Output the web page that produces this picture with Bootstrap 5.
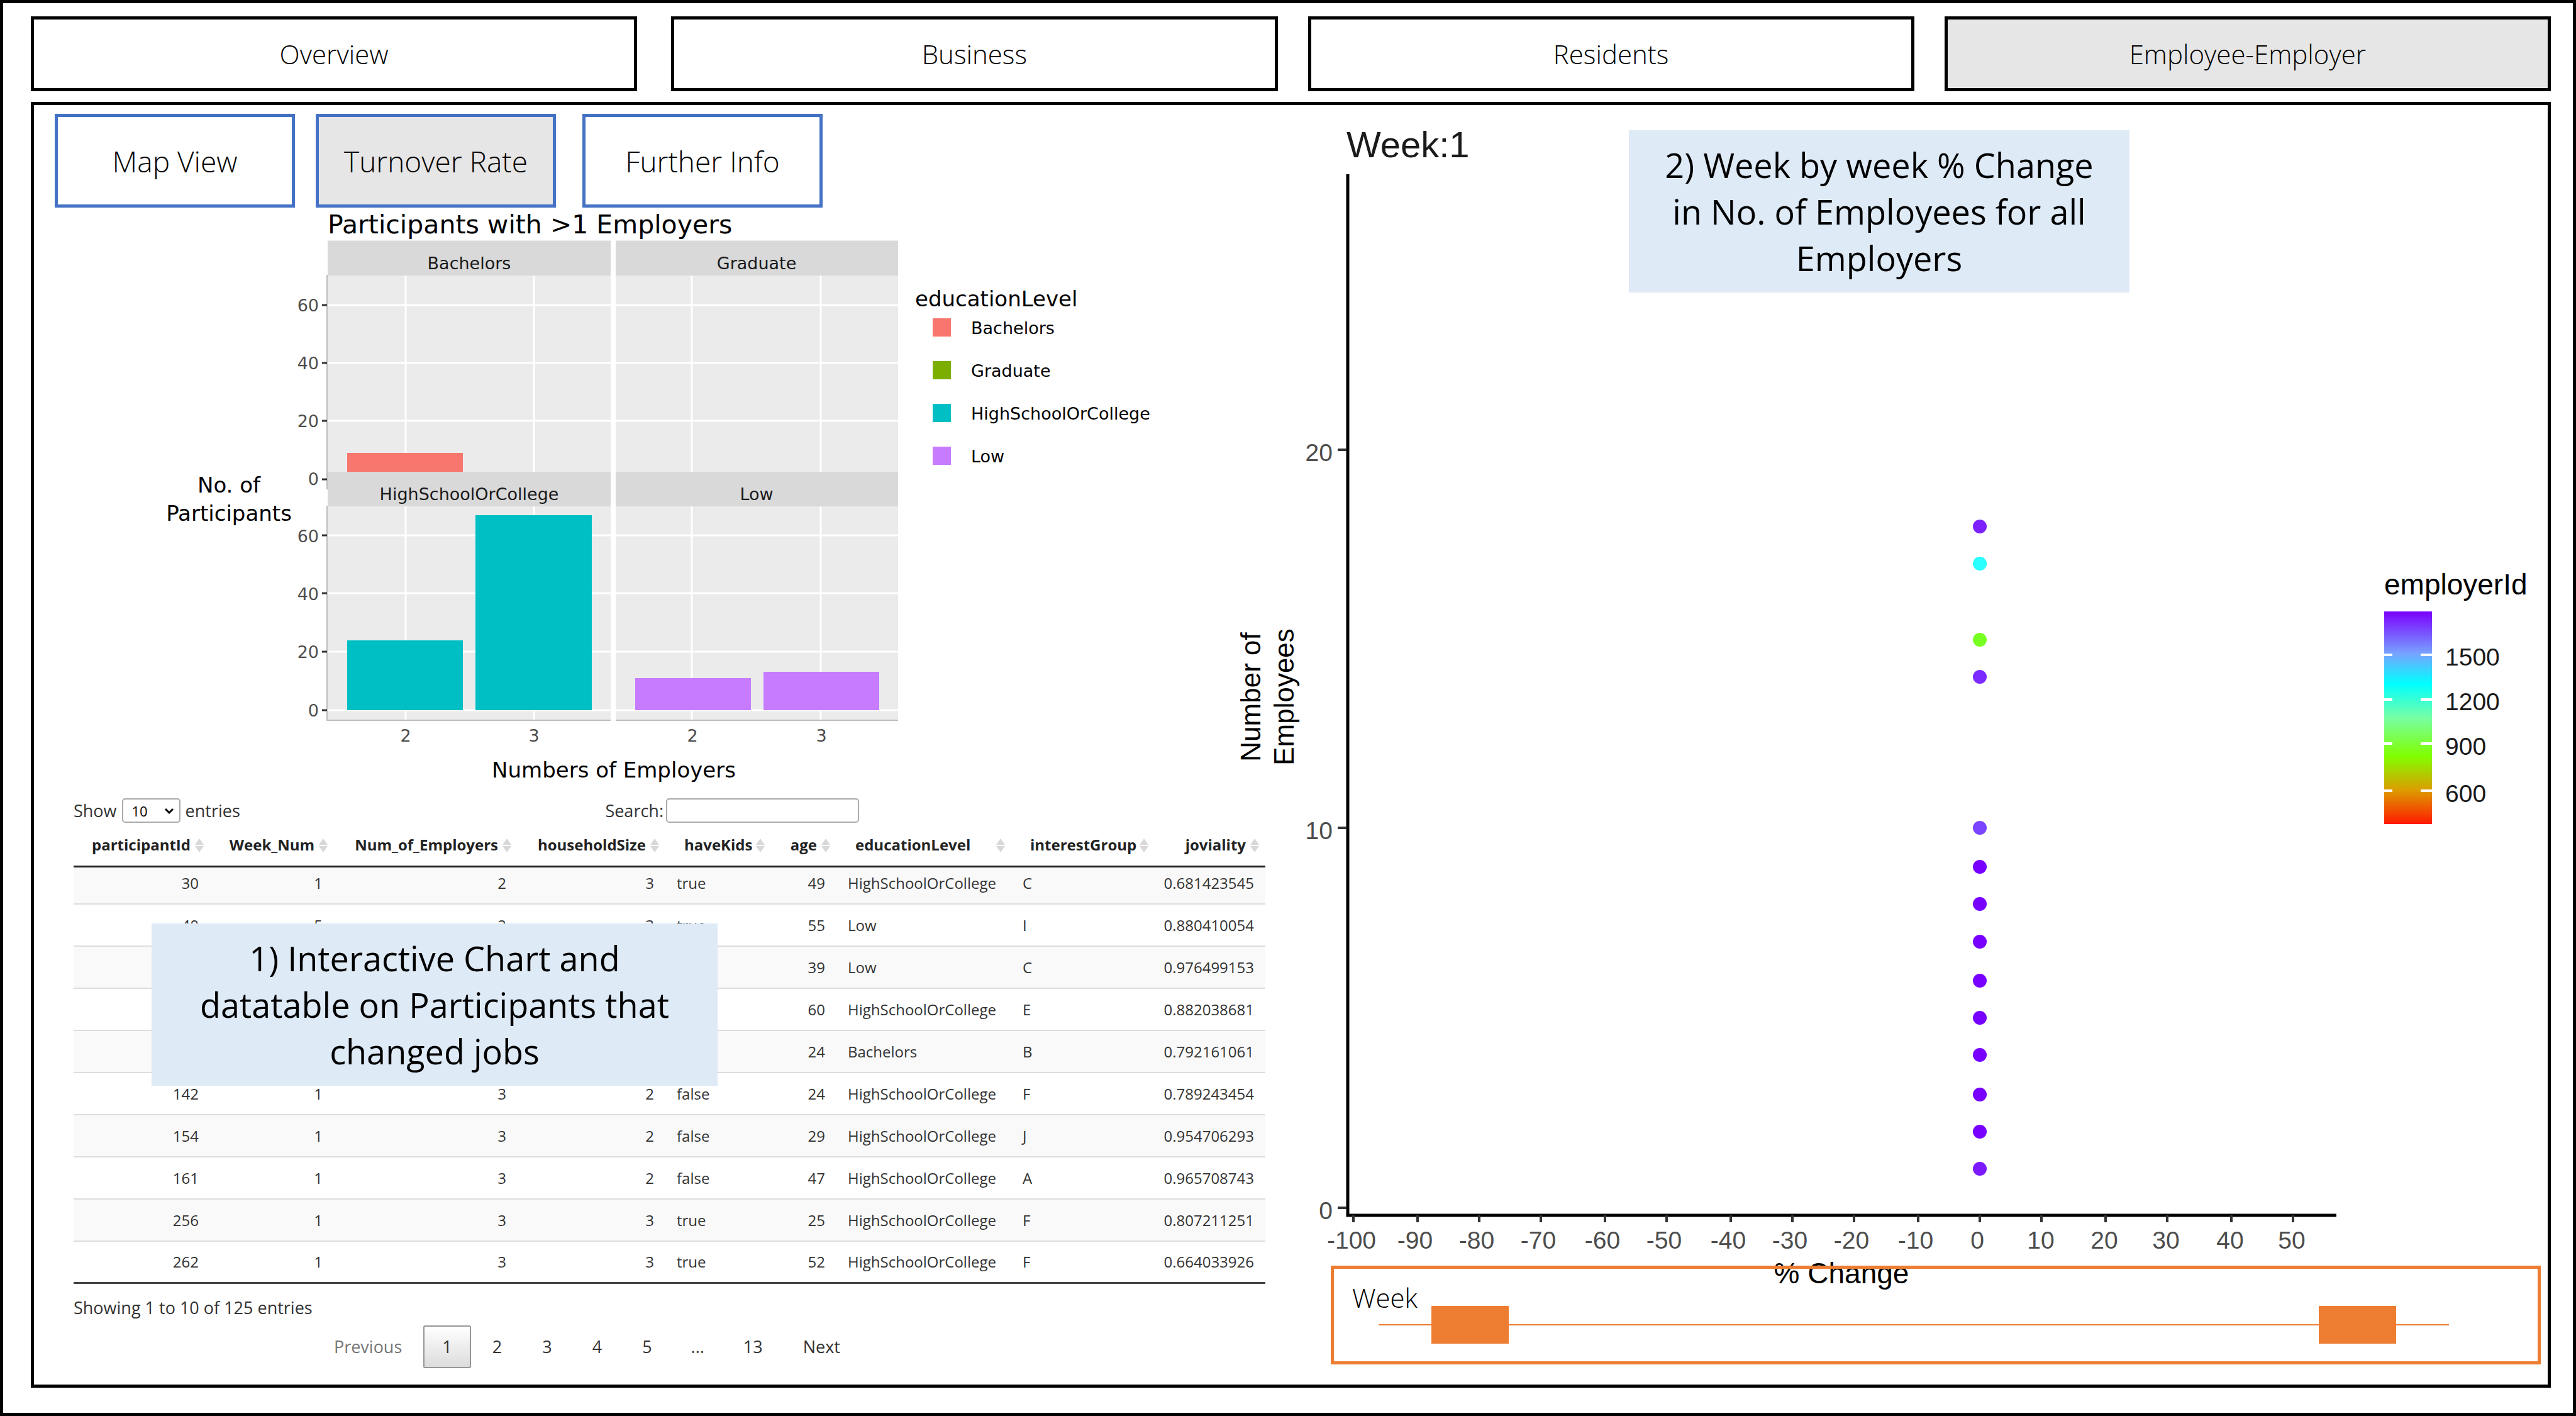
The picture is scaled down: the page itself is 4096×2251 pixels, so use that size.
<!DOCTYPE html>
<html lang="en">
<head>
<meta charset="utf-8">
<meta name="viewport" content="width=device-width, initial-scale=1">
<title>Employee-Employer</title>
<link rel="stylesheet" href="https://cdn.jsdelivr.net/npm/bootstrap@5.3.0/dist/css/bootstrap.min.css">
<style>
  body { font-family: "DejaVu Sans", sans-serif; color: #000; background: #fff; }
  .frame { border: 5px solid #000; padding: 21px 35px 40px 44px; }

  /* Navigation */
  .light-text { font-family: "Open Sans", "Noto Sans", sans-serif; font-weight: 300; color: #000; }
  .main-nav { gap: 48px; margin-bottom: 17px; }
  .main-nav .nav-link { height: 119px; border: 5px solid #000; border-radius: 0; font-size: 42px; line-height: 56px; color: #000; padding: 0; }
  .main-nav .nav-link:first-child { margin-right: 6px; }
  .view-nav { gap: 33px; padding: 14px 0 0 33px; }
  .view-nav .nav-link { width: 382px; height: 149px; border: 5px solid #4472c4; border-radius: 0; font-size: 46px; line-height: 60px; color: #000; padding: 0; }
  .view-nav .nav-link:last-child { margin-left: 9px; }
  .nav-link.active { background: #e7e6e6; }

  .board { border: 5px solid #000; display: grid; grid-template-columns: 1966fr 2031fr; }
  .board svg { overflow: visible; }

  .note-box { position: absolute; background: #deeaf6; font-family: "Open Sans", "Noto Sans", sans-serif; font-size: 54px; line-height: 74px; height: 258px; z-index: 2; }
  .note-left { left: 187px; top: 1301px; width: 900px; }
  .note-right { left: 570px; top: 40px; width: 796px; }

  /* Bar chart */
  .c-title { font-size: 41px; }
  .c-axis { font-size: 34px; }
  .c-label { font-size: 27px; }
  .tick-fill { fill: #4d4d4d; }
  .mid { text-anchor: middle; }
  .end { text-anchor: end; }

  /* Data table */
  .data-area { padding: 9px 8px 0 63px; color: #333; font-family: "Open Sans", "Noto Sans", sans-serif; font-size: 27px; line-height: 34px; }
  .data-bar { width: 1249px; }
  .len-select { width: 93px; height: 39px; padding: 0 0 0 14px; font-size: 22px; line-height: 34px; border: 2px solid #aaa; border-radius: 5px; color: #000;
    background-image: url("data:image/svg+xml,%3csvg xmlns='http://www.w3.org/2000/svg' viewBox='0 0 16 16'%3e%3cpath fill='none' stroke='black' stroke-width='3' d='m2 5 6 6 6-6'/%3e%3c/svg%3e"); background-position: right 8px center; background-size: 16px; }
  .find-box { width: 307px; height: 39px; padding: 0 8px; border: 2px solid #aaa; border-radius: 5px; font-size: 22px; }
  .people { width: 100%; table-layout: fixed; border-collapse: separate; border-spacing: 0; font-size: 24px; line-height: 30px; }
  .people th { height: 71px; border-bottom: 3px solid #222; padding: 2px 31px 0 30px; vertical-align: middle; position: relative; white-space: nowrap; color: #222; }
  .people th svg { position: absolute; right: 10px; top: 25px; }
  .people td { height: 67px; padding: 0 18px 17px; vertical-align: bottom; border-bottom: 2px solid #ddd; white-space: nowrap; }
  .people .text-end { padding-left: 0; }
  .people tbody tr:first-child td { height: 59px; }
  .people tbody tr:nth-child(odd) td { background: #f9f9f9; }
  .people tbody tr:last-child td { border-bottom: 3px solid #444; }
  .info-line { padding-top: 21px; }
  .pager { gap: 4px; margin-top: 11px; }
  .pager button { height: 68px; padding: 0 28px; border: 2px solid transparent; background: none; color: #333; font-size: 27px; }
  .pager button.on { border-color: #979797; border-radius: 3px; background: linear-gradient(#fff, #dcdcdc); }
  .pager button:disabled { color: #777; }
  .pager span { padding: 17px 28px; }

  /* Scatter plot */
  .scatter text { font-family: "Liberation Sans", sans-serif; }
  .s-title { font-size: 58px; }
  .s-axis { font-size: 46px; }
  .s-side { font-size: 44px; }
  .s-label { font-size: 39px; }

  /* Week range */
  .week-box { border: 5px solid #ed7d31; height: 157px; margin: 0 11px 32px 96px; position: relative; padding: 18px 141px 0 29px; }
  .week-name { font-size: 42px; line-height: 56px; }
  .week-track { display: grid; margin: -15px 0 0 42px; }
  .week-track input { grid-area: 1 / 1; appearance: none; -webkit-appearance: none; width: 100%; height: 60px; margin: 0; background: none; pointer-events: none; }
  .week-track input::-webkit-slider-runnable-track { height: 60px; background: linear-gradient(#ed7d31, #ed7d31) center / 100% 2px no-repeat; }
  .week-track input::-webkit-slider-thumb { -webkit-appearance: none; width: 123px; height: 60px; border: 0; border-radius: 0; background: #ed7d31; pointer-events: auto; }
</style>
<script src="https://cdn.jsdelivr.net/npm/bootstrap@5.3.0/dist/js/bootstrap.bundle.min.js"></script>
</head>
<body>
<div class="frame">
  <nav class="main-nav nav flex-nowrap light-text" aria-label="Sections">
    <a class="nav-link flex-fill w-100 d-flex align-items-center justify-content-center" href="#">Overview</a>
    <a class="nav-link flex-fill w-100 d-flex align-items-center justify-content-center" href="#">Business</a>
    <a class="nav-link flex-fill w-100 d-flex align-items-center justify-content-center" href="#">Residents</a>
    <a class="nav-link active flex-fill w-100 d-flex align-items-center justify-content-center" href="#">Employee-Employer</a>
  </nav>

  <main class="board">
    <section class="position-relative">
      <nav class="view-nav nav light-text" aria-label="Views">
        <a class="nav-link d-flex align-items-center justify-content-center" href="#">Map View</a>
        <a class="nav-link active d-flex align-items-center justify-content-center" href="#">Turnover Rate</a>
        <a class="nav-link d-flex align-items-center justify-content-center" href="#">Further Info</a>
      </nav>

      <svg class="d-block w-100" viewBox="54 330 1966 930" role="img" aria-label="Participants with more than one employer">
        <text class="c-title" x="521" y="371">Participants with &gt;1 Employers</text>
        <!-- panels -->
        <g fill="#ebebeb">
          <rect x="521" y="382" width="450" height="762"/>
          <rect x="979" y="382" width="449" height="762"/>
        </g>
        <path stroke="#fff" stroke-width="3" fill="none" d="M521 485H971M521 577H971M521 669H971M521 851H971M521 943H971M521 1036H971M521 1129H971M979 485H1428M979 577H1428M979 669H1428M979 851H1428M979 943H1428M979 1036H1428M979 1129H1428M645 437V1144M849 437V1144M1100 437V1144M1305 437V1144"/>
        <rect x="552" y="720" width="184" height="40" fill="#f8766d"/>
        <g fill="#d9d9d9">
          <rect x="521" y="383" width="450" height="55"/><rect x="979" y="383" width="449" height="55"/>
          <rect x="521" y="750" width="450" height="55"/><rect x="979" y="750" width="449" height="55"/>
        </g>
        <g fill="#00bfc4"><rect x="552" y="1018" width="184" height="111"/><rect x="756" y="819" width="185" height="310"/></g>
        <g fill="#c77cff"><rect x="1010" y="1078" width="184" height="51"/><rect x="1214" y="1068" width="184" height="61"/></g>
        <path stroke="#bebebe" stroke-width="2" fill="none" d="M520 437V778M520 804V1145H971M979 1145H1428"/>
        <path stroke="#333" stroke-width="3" d="M512 485h8M512 577h8M512 669h8M512 762h8M512 851h8M512 943h8M512 1036h8M512 1129h8"/>
        <g class="c-label mid" fill="#1a1a1a">
          <text x="746" y="428">Bachelors</text><text x="1203" y="428">Graduate</text>
          <text x="746" y="795">HighSchoolOrCollege</text><text x="1203" y="795">Low</text>
        </g>
        <g class="c-label end tick-fill">
          <text x="507" y="495">60</text><text x="507" y="587">40</text><text x="507" y="679">20</text><text x="507" y="771">0</text>
          <text x="507" y="862">60</text><text x="507" y="954">40</text><text x="507" y="1046">20</text><text x="507" y="1139">0</text>
        </g>
        <g class="c-label mid tick-fill">
          <text x="645" y="1179">2</text><text x="849" y="1179">3</text><text x="1101" y="1179">2</text><text x="1306" y="1179">3</text>
        </g>
        <g class="c-axis mid">
          <text x="364" y="783">No. of</text><text x="364" y="828">Participants</text>
          <text x="976" y="1236">Numbers of Employers</text>
        </g>
        <text class="c-axis" x="1455" y="487">educationLevel</text>
        <rect x="1483" y="506" width="29" height="29" fill="#f8766d"/><rect x="1483" y="574" width="29" height="29" fill="#7cae00"/>
        <rect x="1483" y="642" width="29" height="29" fill="#00bfc4"/><rect x="1483" y="710" width="29" height="29" fill="#c77cff"/>
        <g class="c-label">
          <text x="1544" y="531">Bachelors</text><text x="1544" y="599">Graduate</text><text x="1544" y="667">HighSchoolOrCollege</text><text x="1544" y="735">Low</text>
        </g>
      </svg>

      <div class="data-area">
        <div class="data-bar d-flex justify-content-between align-items-center">
          <div class="d-flex align-items-center gap-2">
            <label for="len">Show</label>
            <select id="len" class="form-select len-select"><option>10</option><option>25</option><option>50</option></select>
            <span>entries</span>
          </div>
          <div class="d-flex align-items-center gap-1">
            <label for="find">Search:</label>
            <input id="find" type="search" class="find-box">
          </div>
        </div>
        <table class="people">
          <colgroup><col style="width:217px"><col style="width:197px"><col style="width:292px"><col style="width:235px"><col style="width:168px"><col style="width:104px"><col style="width:278px"><col style="width:228px"><col style="width:176px"></colgroup>
          <thead><tr>
            <th class="text-end">participantId<svg width="14" height="22" fill="#d8d8d8"><path d="M7 0l7 10H0zM7 22l7-10H0z"/></svg></th>
            <th class="text-end">Week_Num<svg width="14" height="22" fill="#d8d8d8"><path d="M7 0l7 10H0zM7 22l7-10H0z"/></svg></th>
            <th class="text-end">Num_of_Employers<svg width="14" height="22" fill="#d8d8d8"><path d="M7 0l7 10H0zM7 22l7-10H0z"/></svg></th>
            <th class="text-end">householdSize<svg width="14" height="22" fill="#d8d8d8"><path d="M7 0l7 10H0zM7 22l7-10H0z"/></svg></th>
            <th>haveKids<svg width="14" height="22" fill="#d8d8d8"><path d="M7 0l7 10H0zM7 22l7-10H0z"/></svg></th>
            <th class="text-end">age<svg width="14" height="22" fill="#d8d8d8"><path d="M7 0l7 10H0zM7 22l7-10H0z"/></svg></th>
            <th>educationLevel<svg width="14" height="22" fill="#d8d8d8"><path d="M7 0l7 10H0zM7 22l7-10H0z"/></svg></th>
            <th>interestGroup<svg width="14" height="22" fill="#d8d8d8"><path d="M7 0l7 10H0zM7 22l7-10H0z"/></svg></th>
            <th class="text-end">joviality<svg width="14" height="22" fill="#d8d8d8"><path d="M7 0l7 10H0zM7 22l7-10H0z"/></svg></th>
          </tr></thead>
          <tbody>
            <tr><td class="text-end">30</td><td class="text-end">1</td><td class="text-end">2</td><td class="text-end">3</td><td>true</td><td class="text-end">49</td><td>HighSchoolOrCollege</td><td>C</td><td class="text-end">0.681423545</td></tr>
            <tr><td class="text-end">40</td><td class="text-end">5</td><td class="text-end">2</td><td class="text-end">3</td><td>true</td><td class="text-end">55</td><td>Low</td><td>I</td><td class="text-end">0.880410054</td></tr>
            <tr><td></td><td></td><td></td><td></td><td></td><td class="text-end">39</td><td>Low</td><td>C</td><td class="text-end">0.976499153</td></tr>
            <tr><td></td><td></td><td></td><td></td><td></td><td class="text-end">60</td><td>HighSchoolOrCollege</td><td>E</td><td class="text-end">0.882038681</td></tr>
            <tr><td></td><td></td><td></td><td></td><td></td><td class="text-end">24</td><td>Bachelors</td><td>B</td><td class="text-end">0.792161061</td></tr>
            <tr><td class="text-end">142</td><td class="text-end">1</td><td class="text-end">3</td><td class="text-end">2</td><td>false</td><td class="text-end">24</td><td>HighSchoolOrCollege</td><td>F</td><td class="text-end">0.789243454</td></tr>
            <tr><td class="text-end">154</td><td class="text-end">1</td><td class="text-end">3</td><td class="text-end">2</td><td>false</td><td class="text-end">29</td><td>HighSchoolOrCollege</td><td>J</td><td class="text-end">0.954706293</td></tr>
            <tr><td class="text-end">161</td><td class="text-end">1</td><td class="text-end">3</td><td class="text-end">2</td><td>false</td><td class="text-end">47</td><td>HighSchoolOrCollege</td><td>A</td><td class="text-end">0.965708743</td></tr>
            <tr><td class="text-end">256</td><td class="text-end">1</td><td class="text-end">3</td><td class="text-end">3</td><td>true</td><td class="text-end">25</td><td>HighSchoolOrCollege</td><td>F</td><td class="text-end">0.807211251</td></tr>
            <tr><td class="text-end">262</td><td class="text-end">1</td><td class="text-end">3</td><td class="text-end">3</td><td>true</td><td class="text-end">52</td><td>HighSchoolOrCollege</td><td>F</td><td class="text-end">0.664033926</td></tr>
          </tbody>
        </table>
        <div class="info-line">Showing 1 to 10 of 125 entries</div>
        <div class="data-bar pager d-flex justify-content-end">
          <button type="button" disabled>Previous</button>
          <button type="button" class="on">1</button>
          <button type="button">2</button>
          <button type="button">3</button>
          <button type="button">4</button>
          <button type="button">5</button>
          <span>...</span>
          <button type="button">13</button>
          <button type="button">Next</button>
        </div>
      </div>

      <div class="note-box note-left d-flex align-items-center justify-content-center text-center">
        <div>1) Interactive Chart and<br>datatable on Participants that<br>changed jobs</div>
      </div>
    </section>

    <section class="position-relative">
      <svg class="scatter d-block w-100" viewBox="2020 167 2031 1845" role="img" aria-label="Employees by percent change">
        <text class="s-title" x="2141" y="250" fill="#1a1a1a">Week:1</text>
        <path stroke="#000" stroke-width="5" fill="none" d="M2143 277V1932H3715"/>
        <path stroke="#333" stroke-width="4" d="M2127 715h14M2127 1316h14M2127 1920h14M2152 1932v11M2254 1932v11M2352 1932v11M2450 1932v11M2552 1932v11M2650 1932v11M2752 1932v11M2850 1932v11M2948 1932v11M3050 1932v11M3148 1932v11M3246 1932v11M3348 1932v11M3446 1932v11M3548 1932v11M3646 1932v11"/>
        <g class="s-label end tick-fill">
          <text x="2119" y="733">20</text><text x="2119" y="1334">10</text><text x="2119" y="1938">0</text>
        </g>
        <g class="s-label mid tick-fill">
          <text x="2149" y="1985">-100</text><text x="2250" y="1985">-90</text><text x="2348" y="1985">-80</text><text x="2446" y="1985">-70</text>
          <text x="2548" y="1985">-60</text><text x="2646" y="1985">-50</text><text x="2748" y="1985">-40</text><text x="2846" y="1985">-30</text>
          <text x="2944" y="1985">-20</text><text x="3046" y="1985">-10</text><text x="3144" y="1985">0</text><text x="3245" y="1985">10</text>
          <text x="3346" y="1985">20</text><text x="3444" y="1985">30</text><text x="3546" y="1985">40</text><text x="3644" y="1985">50</text>
        </g>
        <text class="s-axis mid" x="2928" y="2040">% Change</text>
        <g class="s-side mid">
          <text transform="translate(2004 1108) rotate(-90)">Number of</text>
          <text transform="translate(2057 1108) rotate(-90)">Employees</text>
        </g>
        <g fill="#7700ff">
          <circle cx="3148" cy="837" r="11" fill="#7b22ff"/><circle cx="3148" cy="896" r="11" fill="#2bffff"/>
          <circle cx="3148" cy="1017" r="11" fill="#77ff22"/><circle cx="3148" cy="1076" r="11" fill="#7b2bff"/>
          <circle cx="3148" cy="1316" r="11" fill="#7b44ff"/><circle cx="3148" cy="1378" r="11"/>
          <circle cx="3148" cy="1437" r="11"/><circle cx="3148" cy="1497" r="11"/><circle cx="3148" cy="1559" r="11"/>
          <circle cx="3148" cy="1618" r="11"/><circle cx="3148" cy="1677" r="11"/><circle cx="3148" cy="1740" r="11"/>
          <circle cx="3148" cy="1799" r="11"/><circle cx="3148" cy="1858" r="11" fill="#7b1aff"/>
        </g>
        <defs><linearGradient id="ramp" x1="0" y1="0" x2="0" y2="1">
          <stop offset="0" stop-color="#7b00ff"/><stop offset=".2" stop-color="#77a4ff"/><stop offset=".34" stop-color="#00ffff"/>
          <stop offset=".5" stop-color="#77ffa4"/><stop offset=".68" stop-color="#80ff00"/><stop offset=".84" stop-color="#dd9c00"/><stop offset="1" stop-color="#ff1a00"/>
        </linearGradient></defs>
        <text class="s-axis" x="3791" y="945">employerId</text>
        <rect x="3791" y="972" width="76" height="338" fill="url(#ramp)"/>
        <path stroke="#fff" stroke-width="4" d="M3791 1041h13M3791 1112h13M3791 1182h13M3791 1257h13M3867 1041h-18M3867 1112h-18M3867 1182h-18M3867 1257h-18"/>
        <g class="s-label" fill="#1a1a1a">
          <text x="3888" y="1058">1500</text><text x="3888" y="1129">1200</text><text x="3888" y="1200">900</text><text x="3888" y="1275">600</text>
        </g>
      </svg>
      <div class="week-box">
        <label class="week-name light-text d-block" for="from">Week</label>
        <div class="week-track">
          <input id="from" type="range" min="0" max="1000" value="53">
          <input id="to" type="range" min="0" max="1000" value="947" aria-label="Last week">
        </div>
      </div>
      <div class="note-box note-right d-flex align-items-center justify-content-center text-center">
        <div>2) Week by week % Change<br>in No. of Employees for all<br>Employers</div>
      </div>
    </section>
  </main>
</div>
</body>
</html>
